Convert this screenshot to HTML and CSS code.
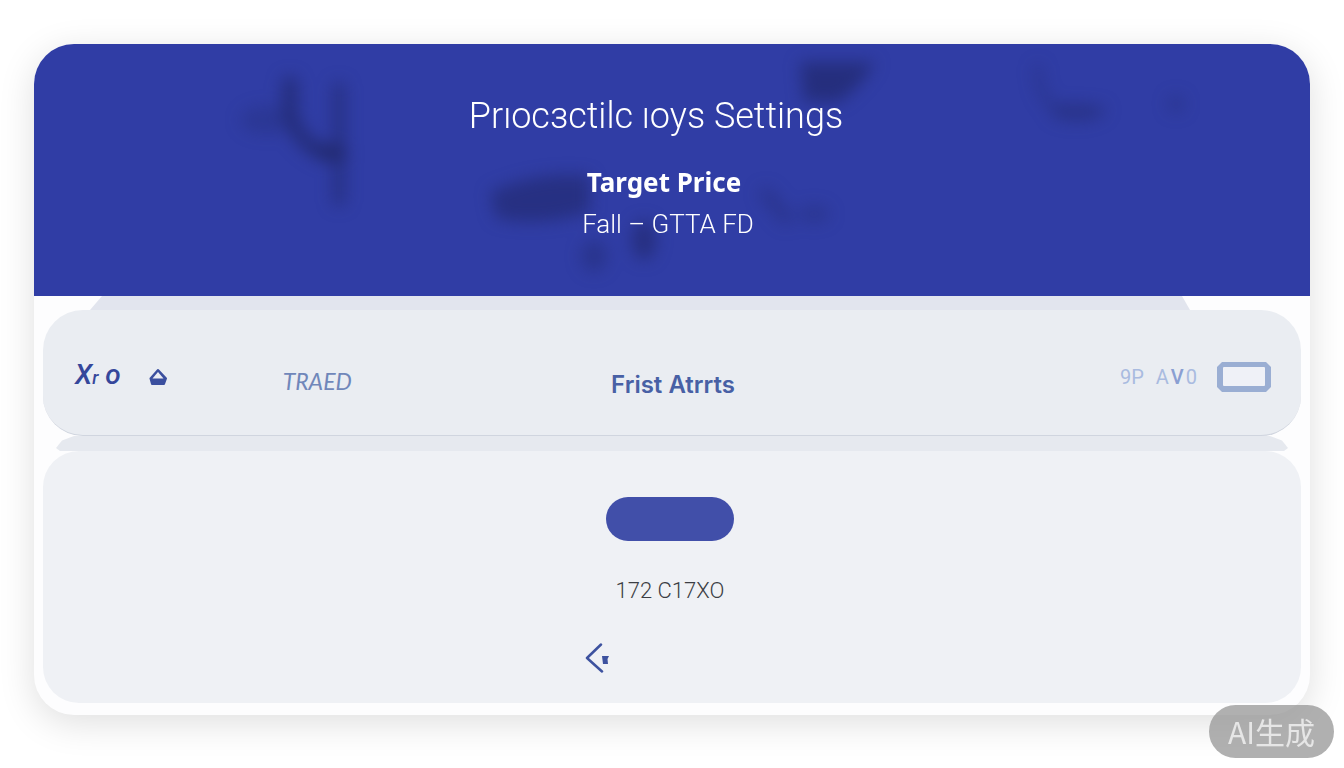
FILE: index.html
```html
<!DOCTYPE html>
<html lang="en">
<head>
<meta charset="utf-8">
<meta name="viewport" content="width=device-width, initial-scale=1">
<title>Settings</title>
<link rel="stylesheet" href="styles.css">
</head>
<body>
<main class="card">
  <header class="hero">
    <svg class="hero-shade" viewBox="0 0 1276 252" preserveAspectRatio="none" aria-hidden="true">
      <defs>
        <filter id="soft" x="-40%" y="-40%" width="180%" height="180%" color-interpolation-filters="sRGB"><feGaussianBlur stdDeviation="8"/></filter>
      </defs>
      <g filter="url(#soft)" fill="#222a70" stroke="#222a70" stroke-linecap="round" stroke-linejoin="round">
        <path d="M256 40v28q6 30 36 42h14" fill="none" stroke-width="16" opacity=".75"/>
        <path d="M305 44v112" fill="none" stroke-width="13" opacity=".6"/>
        <path d="M276 100h32v15h-24z" stroke="none" opacity=".9"/>
        <ellipse cx="232" cy="76" rx="26" ry="14" stroke="none" opacity=".3"/>
        <path d="M456 148q50-22 100-16v36q-50 16-94 6z" stroke="none" opacity=".65"/>
        <path d="M766 18h76l-16 22-20 18h-36z" stroke="none" opacity=".75"/>
        <path d="M1004 24q0 40 30 42h34" fill="none" stroke-width="9" opacity=".35"/>
        <ellipse cx="1042" cy="69" rx="26" ry="9" stroke="none" opacity=".4"/>
        <circle cx="1142" cy="60" r="9" stroke="none" opacity=".35"/>
        <path d="M732 150l20 24" fill="none" stroke-width="14" opacity=".4"/>
        <ellipse cx="780" cy="170" rx="16" ry="9" stroke="none" opacity=".35"/>
        <ellipse cx="610" cy="196" rx="12" ry="20" stroke="none" opacity=".7"/>
        <ellipse cx="560" cy="212" rx="13" ry="16" stroke="none" opacity=".45"/>
      </g>
    </svg>
    <h1 class="hero-title">Prıocзctilc ıoys Settings</h1>
    <h2 class="hero-name">Target Price</h2>
    <p class="hero-note">Fall – GTTA FD</p>
  </header>

  <div class="tab-edge"></div>

  <nav class="bar">
    <div class="bar-start">
      <span class="bar-mark">X<small>r</small> o</span>
      <svg class="bar-home" width="18" height="18" viewBox="0 0 18 18" aria-hidden="true">
        <path d="M9 2L17 10.500L15 16H3L1.500 10.500Z" fill="#3b4f9f" stroke="#3b4f9f" stroke-width="2" stroke-linejoin="round"/>
        <path d="M9 4L14.500 10.500H3.500Z" fill="#eaecf3"/>
      </svg>
      <span class="bar-tag">TRAED</span>
    </div>
    <strong class="bar-title">Frist Atrrts</strong>
    <div class="bar-end">
      <span class="bar-code">9P <span class="bar-letters">A<b>V</b>0</span></span>
      <svg width="54" height="30" viewBox="0 0 54 30" aria-hidden="true">
        <path d="M5 0H49L54 5V25L49 30H5L0 25V5Z" fill="#9aaed3"/>
        <rect x="6" y="5" width="42" height="19" rx="1" fill="#eff1f7"/>
      </svg>
    </div>
  </nav>

  <div class="under-edge"></div>

  <section class="panel">
    <button class="pill" type="button"></button>
    <p class="panel-code">172 C17XO</p>
    <div class="panel-foot">
      <button class="back" type="button">
        <svg width="25" height="30" viewBox="0 0 25 30" aria-hidden="true">
          <path d="M16 1.500L2 15L17 28.500" fill="none" stroke="#3d529f" stroke-width="2.500" stroke-linecap="round" stroke-linejoin="round"/>
          <path d="M17 13H24L22.500 16L23 21H18Z" fill="#3d529f"/>
        </svg>
      </button>
    </div>
  </section>
</main>
<div class="badge">AI生成</div>
</body>
</html>
```
FILE: styles.css
```css
* {
  box-sizing: border-box;
}

body {
  margin: 0;
  padding: 44px 34px 52px;
  background: #fff;
  font-family: Roboto, "Liberation Sans", sans-serif;
}

h1, h2, p {
  margin: 0;
}

button {
  padding: 0;
  border: 0;
  background: none;
  cursor: pointer;
}

svg {
  display: block;
}

.card {
  padding-bottom: 12px;
  border-radius: 40px;
  background: #fdfdfe;
  box-shadow: 0 8px 36px rgba(0, 0, 0, 0.13);
}

.hero {
  position: relative;
  display: flex;
  flex-direction: column;
  align-items: center;
  padding: 48px 24px 52px;
  border-radius: 40px 40px 0 0;
  background: #303da5;
  color: #fff;
  overflow: hidden;
  text-align: center;
}

.hero-shade {
  position: absolute;
  inset: 0;
  width: 100%;
  height: 100%;
}

.hero-title,
.hero-name,
.hero-note {
  position: relative;
}

.hero-title {
  padding-right: 32px;
  font-size: 36px;
  line-height: 48px;
  font-weight: 300;
}

.hero-name {
  margin-top: 24px;
  padding-right: 16px;
  font-family: "Noto Sans", sans-serif;
  font-size: 26px;
  line-height: 36px;
  font-weight: 700;
}

.hero-note {
  margin-top: 4px;
  padding-right: 8px;
  font-size: 26px;
  line-height: 40px;
  font-weight: 300;
}

.tab-edge {
  height: 14px;
  margin: 0 120px 0 56px;
  background: #e2e5ee;
  clip-path: polygon(12px 0, calc(100% - 8px) 0, 100% 100%, 0 100%);
}

.bar {
  display: grid;
  grid-template-columns: 1fr auto 1fr;
  align-items: center;
  min-height: 126px;
  margin: 0 9px;
  padding: 0 30px 0 32px;
  border-bottom: 1px solid #d0d5df;
  border-radius: 40px;
  background: #eaedf2;
}

.bar-start,
.bar-end {
  display: flex;
  align-items: center;
}

.bar-start {
  padding-top: 8px;
}

.bar-mark {
  color: #35479b;
  font-size: 28px;
  line-height: 32px;
  font-style: italic;
  font-weight: 500;
}

.bar-mark small {
  font-size: 18px;
}

.bar-home {
  margin-left: 28px;
}

.bar-tag {
  margin-left: 116px;
  padding-top: 8px;
  color: #7087ba;
  font-family: Lato, sans-serif;
  font-size: 23px;
  line-height: 28px;
  font-style: italic;
}

.bar-title {
  padding-top: 24px;
  color: #4860a5;
  font-family: Inter, sans-serif;
  font-size: 24px;
  line-height: 28px;
  font-weight: 600;
}

.bar-end {
  justify-content: flex-end;
  gap: 20px;
  padding-top: 8px;
}

.bar-code {
  display: flex;
  gap: 12px;
  color: #a9bbe0;
  font-size: 20px;
  line-height: 28px;
}

.bar-letters {
  display: flex;
  gap: 2px;
}

.bar-letters b {
  color: #8a9fd2;
  font-weight: 500;
}

.under-edge {
  height: 15px;
  margin: 0 22px;
  background: #e6e9ef;
  clip-path: polygon(18px 0, calc(100% - 18px) 0, calc(100% - 6px) 30%, 100% 80%, calc(100% - 4px) 100%, 4px 100%, 0 80%, 6px 30%);
}

.panel {
  display: flex;
  flex-direction: column;
  align-items: center;
  margin: 0 9px;
  padding: 46px 28px 30px 24px;
  border-radius: 36px;
  background: #eff1f5;
}

.pill {
  width: 128px;
  height: 44px;
  border-radius: 22px;
  background: #414fa9;
}

.panel-code {
  margin-top: 32px;
  color: #3c3e44;
  font-size: 22px;
  line-height: 36px;
  font-weight: 300;
}

.panel-foot {
  display: flex;
  width: 170px;
  margin-top: 34px;
}

.badge {
  position: fixed;
  right: 10px;
  bottom: 10px;
  padding: 0 19px;
  border-radius: 27px;
  background: rgba(150, 150, 150, 0.75);
  color: #e6e6e6;
  font-family: "Noto Sans CJK SC", sans-serif;
  font-size: 30px;
  line-height: 53px;
}
```
